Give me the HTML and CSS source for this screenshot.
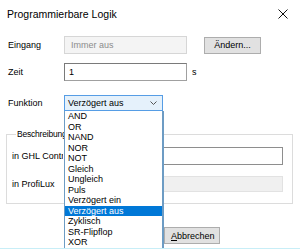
FILE: index.html
```html
<!DOCTYPE html>
<html>
<head>
<meta charset="utf-8">
<link rel="stylesheet" href="styles.css">
</head>
<body>
<div class="window">
  <div class="titlebar">
    <span class="title">Programmierbare Logik</span>
    <span class="close">
      <svg width="10" height="10" viewBox="0 0 10 10"><path d="M0.5 0.5 L9.5 9.5 M9.5 0.5 L0.5 9.5" stroke="#111" stroke-width="1" fill="none"/></svg>
    </span>
  </div>
  <div class="row row-eingang">
    <span class="label">Eingang</span>
    <div class="input disabled wide">Immer aus</div>
    <div class="button change">Ändern...</div>
  </div>
  <div class="row row-zeit">
    <span class="label">Zeit</span>
    <div class="input wide">1</div>
    <span class="unit">s</span>
  </div>
  <div class="row row-funktion">
    <span class="label">Funktion</span>
    <div class="select">
      <span>Verzögert aus</span>
      <svg class="chev" width="7" height="4" viewBox="0 0 7 4"><path d="M0.5 0.5 L3.5 3.5 L6.5 0.5" stroke="#555" stroke-width="1" fill="none"/></svg>
    </div>
  </div>
  <fieldset class="group">
    <legend>Beschreibung</legend>
    <div class="grow grow-ghl">
      <span class="glabel"><span class="clip">in GHL Control</span></span>
      <div class="input desc"></div>
    </div>
    <div class="grow grow-pl">
      <span class="glabel"><span class="clip">in ProfiLux</span></span>
      <div class="input desc disabled"></div>
    </div>
  </fieldset>
  <div class="buttons">
    <div class="button ok">OK</div>
    <div class="button cancel"><u>A</u>bbrechen</div>
  </div>
  <ul class="dropdown">
    <li>AND</li>
    <li>OR</li>
    <li>NAND</li>
    <li>NOR</li>
    <li>NOT</li>
    <li>Gleich</li>
    <li>Ungleich</li>
    <li>Puls</li>
    <li>Verzögert ein</li>
    <li class="selected">Verzögert aus</li>
    <li>Zyklisch</li>
    <li>SR-Flipflop</li>
    <li>XOR</li>
  </ul>
</div>
</body>
</html>
```

FILE: styles.css
```css
html, body {
  margin: 0;
  padding: 0;
}
body {
  width: 300px;
  height: 249px;
  overflow: hidden;
  background: #ffffff;
  font-family: "Liberation Sans", Arial, sans-serif;
  font-size: 9px;
  color: #000;
}
.window {
  position: relative;
  height: 248px;
  border-bottom: 1px solid #c8eef7;
  overflow: hidden;
}
.titlebar {
  height: 36px;
  display: flex;
  justify-content: space-between;
  align-items: flex-start;
  padding: 0 12px 0 7px;
}
.title {
  font-size: 10.5px;
  margin-top: 8px;
  line-height: 12px;
}
.close {
  margin-top: 9px;
  display: flex;
}
.row {
  display: flex;
  align-items: center;
  padding-left: 8px;
}
.label {
  width: 56px;
}
.row-eingang {
  height: 18px;
}
.row-zeit {
  height: 18px;
  margin-top: 9px;
}
.row-funktion {
  height: 16px;
  margin-top: 14px;
}
.input {
  box-sizing: border-box;
  height: 100%;
  border: 1px solid #a0a0a0;
  border-top-color: #7a7a7a;
  border-left-color: #7a7a7a;
  background: #fff;
  display: flex;
  align-items: center;
  padding-left: 4px;
}
.input.wide {
  width: 123px;
}
.input.disabled {
  background: #f4f4f4;
  border-color: #d6d6d6;
  color: #8c8c8c;
  padding-left: 6px;
}
.unit {
  margin-left: 5px;
}
.button {
  box-sizing: border-box;
  background: #e1e1e1;
  border: 1px solid #adadad;
  display: flex;
  align-items: center;
  justify-content: center;
  height: 17px;
}
.change {
  width: 57px;
  margin-left: 17px;
}
.select {
  box-sizing: border-box;
  width: 99px;
  height: 16px;
  border: 1px solid #569de5;
  background: #e5f1fb;
  display: flex;
  align-items: center;
  justify-content: space-between;
  padding: 0 5px 0 3px;
}
.chev {
  display: block;
}
.group {
  margin: 18px 7px 0 6px;
  padding: 0 9px 11px 5px;
  border: 1px solid #dcdcdc;
  min-width: 0;
}
.group legend {
  padding: 0 1px;
  margin-left: 4px;
  line-height: 10px;
  font-size: 8.5px;
  letter-spacing: -0.2px;
}
.grow {
  display: flex;
  align-items: center;
  height: 18px;
}
.grow-ghl {
  margin-top: 8px;
}
.grow-pl {
  margin-top: 11px;
  height: 16px;
}
.glabel {
  width: 96px;
  white-space: nowrap;
}
.clip {
  display: block;
  width: 51px;
  overflow: hidden;
}
.input.desc {
  flex: 1;
  border-color: #8e8e8e;
}
.input.desc.disabled {
  background: #f0f0f0;
  border-color: #e2e2e2;
}
.buttons {
  display: flex;
  justify-content: flex-end;
  gap: 4px;
  padding-right: 80px;
  margin-top: 23px;
}
.ok, .cancel {
  width: 56px;
}
.cancel {
  justify-content: flex-start;
  padding-left: 6px;
}
.dropdown {
  position: absolute;
  left: 64px;
  top: 111px;
  width: 100px;
  height: 150px;
  box-sizing: border-box;
  margin: 0;
  padding: 0;
  list-style: none;
  background: #fff;
  border: 1px solid #6d9cc4;
  border-top: none;
  border-right-width: 2px;
}
.dropdown li {
  height: 10.5px;
  line-height: 10.5px;
  padding-left: 3px;
  white-space: nowrap;
}
.dropdown li.selected {
  background: #0078d7;
  color: #fff;
}
```
